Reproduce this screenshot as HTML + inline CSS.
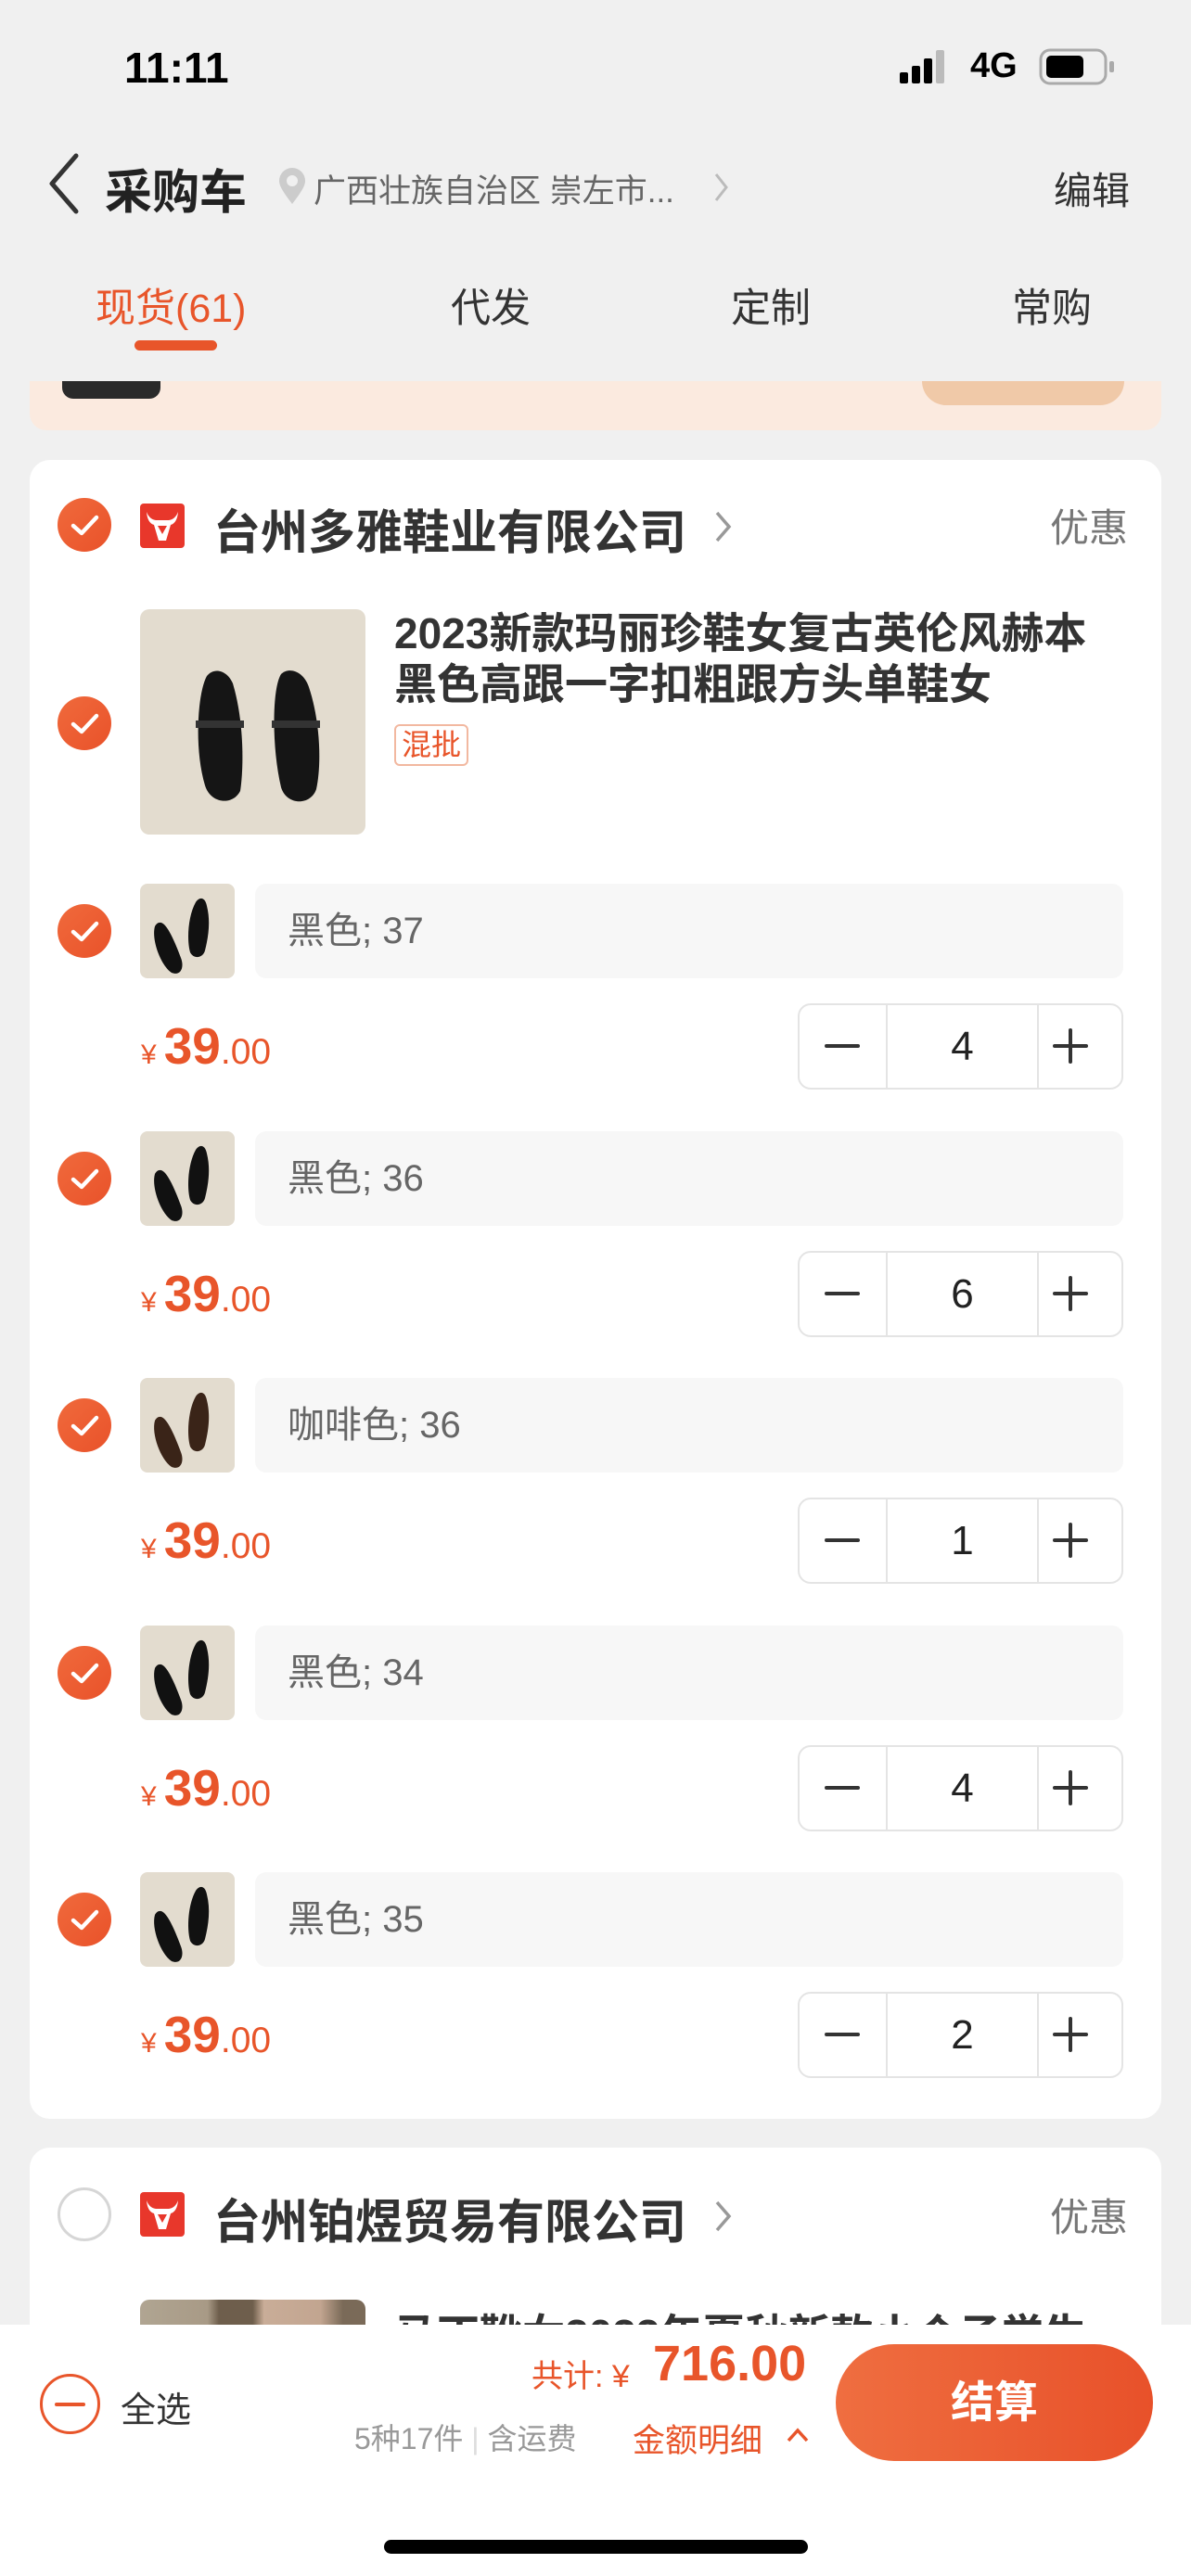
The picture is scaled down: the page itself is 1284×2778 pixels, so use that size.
<!DOCTYPE html>
<html><head><meta charset="utf-8"><style>
*{margin:0;padding:0;box-sizing:border-box}
body{width:1284px;height:2778px;background:#f0f0f0;position:relative;overflow:hidden;font-family:"Liberation Sans","Noto Sans CJK SC",sans-serif;color:#333}
.a{position:absolute;white-space:nowrap}
.card{position:absolute;left:32px;width:1220px;background:#fff;border-radius:22px}
.chk{position:absolute;left:62px;width:58px;height:58px;border-radius:50%;background:linear-gradient(135deg,#f06a3c,#e9522a)}
.chk svg{position:absolute;left:0;top:0}
.logo{position:absolute;left:151px;width:48px;height:48px;background:#e8372b;border-radius:4px}
.thumb{position:absolute;left:151px;width:102px;height:102px;border-radius:8px;background:#e3dccf;overflow:hidden}
.sku{position:absolute;left:275px;width:936px;height:102px;border-radius:12px;background:#f7f7f7;font-size:40px;color:#666;line-height:102px;padding-left:35px}
.price{position:absolute;left:152px;color:#e8552a;white-space:nowrap}
.step{position:absolute;left:860px;width:351px;height:93px;border:2px solid #e4e4e4;border-radius:14px}
.step .d1{position:absolute;left:93px;top:0;bottom:0;width:2px;background:#e4e4e4}
.step .d2{position:absolute;left:256px;top:0;bottom:0;width:2px;background:#e4e4e4}
.step .n{position:absolute;left:95px;width:161px;top:0;line-height:89px;text-align:center;font-size:44px;color:#222}
.step .m{position:absolute;left:27px;top:42px;width:38px;height:4px;background:#333;border-radius:2px}
.step .p1{position:absolute;left:273px;top:42px;width:38px;height:4px;background:#333;border-radius:2px}
.step .p2{position:absolute;left:290px;top:25px;width:4px;height:38px;background:#333;border-radius:2px}
</style></head><body>

<!-- status bar -->
<div class="a" style="left:134px;top:46px;font-size:46px;font-weight:bold;color:#000">11:11</div>
<svg class="a" style="left:970px;top:54px" width="60" height="36"><rect x="0" y="24" width="9" height="12" rx="2" fill="#000"/><rect x="13" y="17" width="9" height="19" rx="2" fill="#000"/><rect x="26" y="9" width="9" height="27" rx="2" fill="#000"/><rect x="39" y="0" width="9" height="36" rx="2" fill="#bbb"/></svg>
<div class="a" style="left:1046px;top:50px;font-size:38px;font-weight:bold;color:#000">4G</div>
<svg class="a" style="left:1120px;top:52px" width="84" height="40"><rect x="2" y="2" width="70" height="36" rx="10" fill="none" stroke="#aaa" stroke-width="3"/><rect x="8" y="8" width="40" height="24" rx="5" fill="#000"/><rect x="76" y="14" width="5" height="12" rx="2" fill="#aaa"/></svg>

<!-- nav -->
<svg class="a" style="left:48px;top:164px" width="40" height="68"><path d="M34 4 L8 34 L34 64" fill="none" stroke="#333" stroke-width="5" stroke-linecap="round" stroke-linejoin="round"/></svg>
<div class="a" style="left:113px;top:166px;font-size:51px;font-weight:bold;color:#222">采购车</div>
<svg class="a" style="left:298px;top:180px" width="34" height="42"><path d="M17 40 C8 28 3 21 3 15 A14 14 0 0 1 31 15 C31 21 26 28 17 40Z" fill="#ccc"/><circle cx="17" cy="15" r="6" fill="#f0f0f0"/></svg>
<div class="a" style="left:338px;top:178px;font-size:35px;color:#666">广西壮族自治区 崇左市...</div>
<svg class="a" style="left:768px;top:184px" width="20" height="36"><path d="M4 4 L15 18 L4 32" fill="none" stroke="#bbb" stroke-width="3"/></svg>
<div class="a" style="left:1136px;top:172px;font-size:41px;color:#333">编辑</div>

<!-- tabs -->
<div class="a" style="left:103px;top:298px;font-size:43px;color:#e8552a">现货(61)</div>
<div class="a" style="left:486px;top:298px;font-size:43px;color:#333">代发</div>
<div class="a" style="left:788px;top:298px;font-size:43px;color:#333">定制</div>
<div class="a" style="left:1091px;top:298px;font-size:43px;color:#333">常购</div>
<div class="a" style="left:145px;top:367px;width:89px;height:11px;border-radius:6px;background:#e8552a"></div>

<!-- banner -->
<div class="a" style="left:32px;top:411px;width:1220px;height:53px;background:#fbeadf;border-radius:0 0 18px 18px"></div>
<div class="a" style="left:67px;top:411px;width:106px;height:19px;background:#2a2a2a;border-radius:0 0 12px 12px"></div>
<div class="a" style="left:994px;top:411px;width:218px;height:26px;background:#f0c9a8;border-radius:0 0 60px 60px"></div>

<!-- card 1 -->
<div class="card" style="top:496px;height:1789px"></div>
<div class="chk" style="top:537px"><svg width="58" height="58"><path d="M17 30 L26 38 L42 21" fill="none" stroke="#fff" stroke-width="4.5" stroke-linecap="round" stroke-linejoin="round"/></svg></div>
<div class="logo" style="top:543px"><svg width="48" height="48"><path d="M7 9 Q10 17 17 18 L31 18 Q38 17 41 9 Q40 21 33 23 L28 40 L20 40 L15 23 Q8 21 7 9Z" fill="#fff"/><path d="M19 24 L24 33 L29 24Z" fill="#e8372b"/></svg></div>
<div class="a" style="left:230px;top:533px;font-size:51px;font-weight:bold;color:#333">台州多雅鞋业有限公司</div>
<svg class="a" style="left:768px;top:548px" width="24" height="40"><path d="M5 5 L18 20 L5 35" fill="none" stroke="#999" stroke-width="3.5"/></svg>
<div class="a" style="left:1132px;top:536px;font-size:42px;color:#777">优惠</div>

<div class="chk" style="top:751px"><svg width="58" height="58"><path d="M17 30 L26 38 L42 21" fill="none" stroke="#fff" stroke-width="4.5" stroke-linecap="round" stroke-linejoin="round"/></svg></div>
<div class="a" style="left:151px;top:657px;width:243px;height:243px;border-radius:10px;background:#e3dccf">
<svg width="243" height="243"><path d="M72 72 C62 90 58 150 70 190 C76 210 100 212 108 196 C112 170 112 120 100 80 C94 66 80 62 72 72Z" fill="#151515"/><path d="M152 70 C142 86 142 150 152 192 C158 212 184 212 190 194 C196 166 194 120 182 84 C176 66 160 62 152 70Z" fill="#151515"/><rect x="60" y="120" width="52" height="8" fill="#333"/><rect x="142" y="120" width="52" height="8" fill="#333"/></svg></div>
<div class="a" style="left:425px;top:656px;font-size:46px;line-height:55px;font-weight:bold;color:#333">2023新款玛丽珍鞋女复古英伦风赫本<br>黑色高跟一字扣粗跟方头单鞋女</div>
<div class="a" style="left:425px;top:781px;width:80px;height:45px;border:2px solid #f2b8a0;border-radius:6px;font-size:32px;line-height:41px;text-align:center;color:#e8552a">混批</div>

<div id="rows"></div>

<!-- card 2 -->
<div class="card" style="top:2316px;height:300px"></div>
<div class="a" style="left:62px;top:2359px;width:58px;height:58px;border-radius:50%;border:3px solid #d6d6d6"></div>
<div class="logo" style="top:2364px"><svg width="48" height="48"><path d="M7 9 Q10 17 17 18 L31 18 Q38 17 41 9 Q40 21 33 23 L28 40 L20 40 L15 23 Q8 21 7 9Z" fill="#fff"/><path d="M19 24 L24 33 L29 24Z" fill="#e8372b"/></svg></div>
<div class="a" style="left:230px;top:2355px;font-size:51px;font-weight:bold;color:#333">台州铂煜贸易有限公司</div>
<svg class="a" style="left:768px;top:2370px" width="24" height="40"><path d="M5 5 L18 20 L5 35" fill="none" stroke="#999" stroke-width="3.5"/></svg>
<div class="a" style="left:1132px;top:2358px;font-size:42px;color:#777">优惠</div>
<div class="a" style="left:151px;top:2480px;width:243px;height:60px;border-radius:10px 10px 0 0;background:linear-gradient(90deg,#b0a592 0,#a89a86 30%,#6e5e4c 35%,#6e5e4c 50%,#c9ad98 55%,#c2a590 80%,#7a6a58 90%)"></div>
<div class="a" style="left:425px;top:2482px;font-size:46px;font-weight:bold;color:#333">马丁靴女2023年夏秋新款小个子学生</div>

<!-- bottom bar -->
<div class="a" style="left:0;top:2507px;width:1284px;height:271px;background:#fff"></div>
<div class="a" style="left:43px;top:2560px;width:65px;height:65px;border-radius:50%;border:3px solid #e8552a"></div>
<div class="a" style="left:59px;top:2591px;width:33px;height:4px;background:#e8552a;border-radius:2px"></div>
<div class="a" style="left:130px;top:2568px;font-size:38px;color:#333">全选</div>
<div class="a" style="left:573px;top:2535px;font-size:34px;color:#e8552a">共计: ¥</div>
<div class="a" style="left:704px;top:2518px;font-size:54px;font-weight:bold;color:#e8552a">716.00</div>
<div class="a" style="left:382px;top:2605px;font-size:32px;color:#999">5种17件 <span style="color:#ddd">|</span> 含运费</div>
<div class="a" style="left:682px;top:2604px;font-size:35px;color:#e8552a">金额明细</div>
<svg class="a" style="left:846px;top:2615px" width="28" height="22"><path d="M4 17 L14 6 L24 17" fill="none" stroke="#e8552a" stroke-width="3.5"/></svg>
<div class="a" style="left:901px;top:2528px;width:342px;height:126px;border-radius:63px;background:linear-gradient(90deg,#ef6e40,#e8512a);color:#fff;font-size:47px;font-weight:bold;text-align:center;line-height:126px">结算</div>
<div class="a" style="left:414px;top:2739px;width:457px;height:15px;border-radius:8px;background:#000"></div>

<script>
var data=[["黑色; 37","4"],["黑色; 36","6"],["咖啡色; 36","1"],["黑色; 34","4"],["黑色; 35","2"]];
var h="";
for(var i=0;i<5;i++){
 var c=1004+i*266.5;var t=Math.round(c-51);
 var dark=i==2?"#3a2418":"#111";
 h+='<div class="chk" style="top:'+Math.round(c-29)+'px"><svg width="58" height="58"><path d="M17 30 L26 38 L42 21" fill="none" stroke="#fff" stroke-width="4.5" stroke-linecap="round" stroke-linejoin="round"/></svg></div>';
 h+='<div class="thumb" style="top:'+t+'px"><svg width="102" height="102"><path d="M16 46 C12 60 22 88 34 96 C44 100 48 90 44 80 C38 64 32 50 26 44 C22 40 18 42 16 46Z" fill="'+dark+'"/><path d="M60 20 C52 34 50 60 54 74 C58 82 68 80 70 72 C74 56 76 40 72 24 C70 14 64 14 60 20Z" fill="'+dark+'"/></svg></div>';
 h+='<div class="sku" style="top:'+t+'px">'+data[i][0]+'</div>';
 h+='<div class="price" style="top:'+Math.round(c+92)+'px"><span style="font-size:30px">¥</span><span style="font-size:55px;font-weight:bold;margin-left:8px">39</span><span style="font-size:39px">.00</span></div>';
 h+='<div class="step" style="top:'+Math.round(c+78)+'px"><div class="d1"></div><div class="d2"></div><div class="m"></div><div class="n">'+data[i][1]+'</div><div class="p1"></div><div class="p2"></div></div>';
}
document.getElementById("rows").innerHTML=h;
</script>
</body></html>
